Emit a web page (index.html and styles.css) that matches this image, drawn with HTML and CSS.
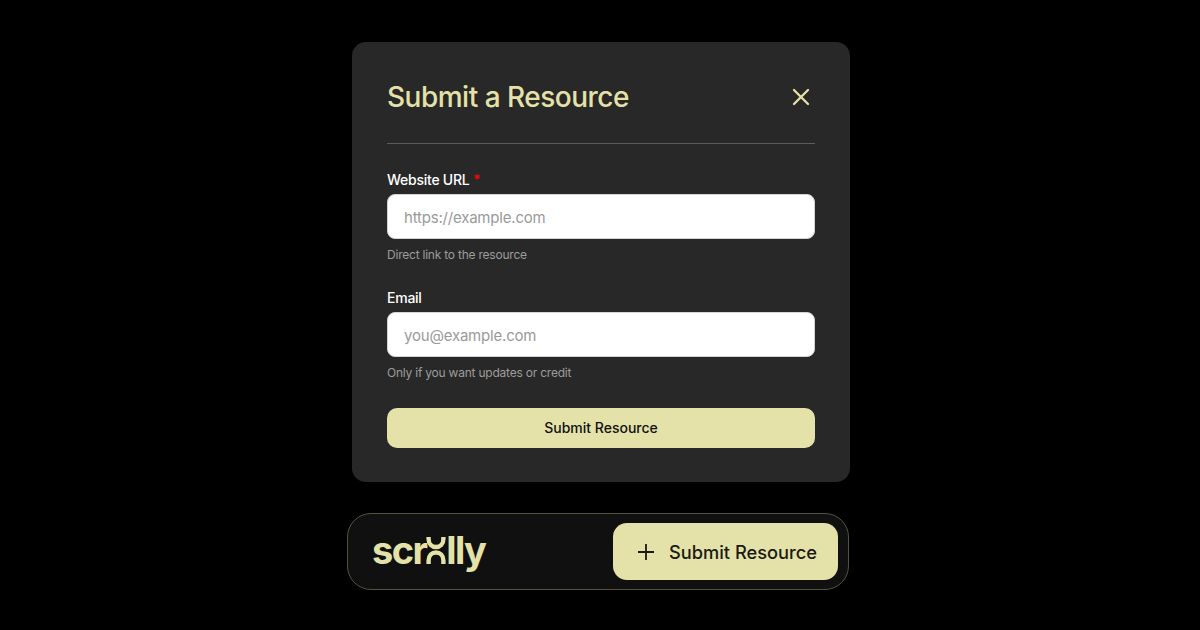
FILE: index.html
```html
<!DOCTYPE html>
<html lang="en">
<head>
    <meta charset="UTF-8">
    <meta name="viewport" content="width=device-width, initial-scale=1.0">
    <title>Submit a Resource</title>
    <link rel="stylesheet" href="styles.css">
</head>
<body>
    <div class="page">
        <div class="modal">
            <div class="modal-header">
                <h2 class="modal-title">Submit a Resource</h2>
                <svg class="close-icon" viewBox="0 0 18 18" width="18" height="18" fill="none" stroke="#e4e2a8" stroke-width="2.3" stroke-linecap="round">
                    <path d="M2 2 16 16M16 2 2 16"/>
                </svg>
            </div>
            <form class="form">
                <div class="field field-url">
                    <label class="field-label">Website URL <span class="required">*</span></label>
                    <input class="field-input" type="text" placeholder="https://example.com">
                    <p class="field-hint">Direct link to the resource</p>
                </div>
                <div class="field field-email">
                    <label class="field-label">Email</label>
                    <input class="field-input" type="text" placeholder="you@example.com">
                    <p class="field-hint">Only if you want updates or credit</p>
                </div>
                <button class="submit-button" type="button">Submit Resource</button>
            </form>
        </div>
        <div class="bar">
            <div class="logo">
                <span>scr</span><svg class="logo-mark" viewBox="0 0 20 27" width="20" height="27" fill="none" stroke="#e4e2a8" stroke-width="4.4">
                    <path d="M2.6 0V2C2.6 7 6 10 10 10S17.4 7 17.4 2V0"/>
                    <path d="M2.6 27V23.5C2.6 18.5 6 15.5 10 15.5S17.4 18.5 17.4 23.5V27"/>
                </svg><span>lly</span>
            </div>
            <button class="add-button" type="button">
                <svg viewBox="0 0 16 16" width="16" height="16" fill="none" stroke="#1a1a12" stroke-width="1.8">
                    <path d="M8 0V16M0 8H16"/>
                </svg>
                <span>Submit Resource</span>
            </button>
        </div>
    </div>
</body>
</html>
```

FILE: styles.css
```css
* {
    box-sizing: border-box;
}

body {
    font-family: Inter, "Noto Sans", sans-serif;
    margin: 0;
    background-color: #000;
    height: 630px;
    overflow: hidden;
}

.page {
    width: 502px;
    margin-left: 347px;
    padding-top: 42px;
}

.modal {
    width: 498px;
    height: 440px;
    margin-left: 5px;
    padding: 0 35px;
    background-color: #282828;
    border-radius: 14px;
}

.modal-header {
    display: flex;
    justify-content: space-between;
    align-items: center;
    height: 102px;
    padding: 8px 5px 0 0;
    border-bottom: 1px solid #5c5c5c;
}

.modal-title {
    margin: 0;
    font-size: 28px;
    font-weight: 450;
    letter-spacing: -0.5px;
    color: #e4e2a8;
}

.form {
    display: flex;
    flex-direction: column;
}

.field {
    display: flex;
    flex-direction: column;
}

.field-url {
    padding-top: 26px;
}

.field-email {
    padding-top: 25px;
}

.field-label {
    height: 24px;
    font-size: 14px;
    line-height: 20px;
    font-weight: 500;
    letter-spacing: -0.25px;
    color: #fff;
}

.required {
    color: #f00;
}

.field-input {
    width: 100%;
    height: 45px;
    padding: 1px 16px 0;
    border: 1px solid #d4d4d4;
    border-radius: 8px;
    background-color: #fff;
    font-family: inherit;
    font-size: 15px;
    letter-spacing: -0.2px;
}

.field-input::placeholder {
    color: #9a9a9a;
    opacity: 1;
}

.field-hint {
    margin: 8px 0 0;
    font-size: 12px;
    line-height: 16px;
    letter-spacing: -0.22px;
    color: #9c9c9c;
}

.submit-button {
    height: 40px;
    margin-top: 27px;
    padding-bottom: 2px;
    border: 0;
    border-radius: 10px;
    background-color: #e4e2a8;
    font-family: inherit;
    font-size: 14px;
    font-weight: 500;
    color: #111;
}

.bar {
    display: flex;
    justify-content: space-between;
    align-items: center;
    height: 77px;
    margin-top: 31px;
    padding: 0 10px 0 24px;
    background-color: #111010;
    border: 1px solid #54543e;
    border-radius: 24px;
}

.logo {
    display: flex;
    align-items: baseline;
    padding-bottom: 4px;
    font-size: 38px;
    line-height: 38px;
    font-weight: 700;
    letter-spacing: -1.6px;
    color: #e4e2a8;
}

.add-button {
    display: flex;
    align-items: center;
    gap: 15px;
    width: 225px;
    height: 57px;
    padding: 0 0 0 25px;
    border: 0;
    border-radius: 14px;
    background-color: #e4e2a8;
    font-family: inherit;
    font-size: 18.25px;
    font-weight: 500;
    color: #1a1a12;
}
```
